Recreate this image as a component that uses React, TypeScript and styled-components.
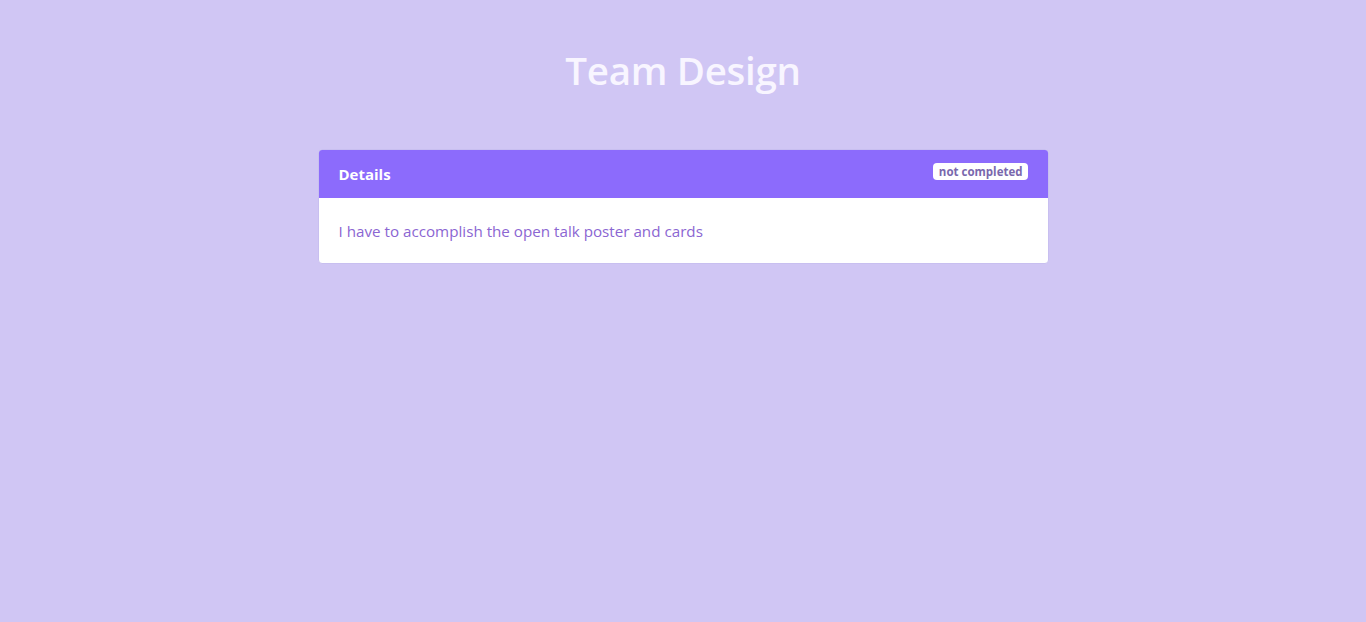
import React from 'react';
import styled, { createGlobalStyle } from 'styled-components';

const GlobalStyle = createGlobalStyle`
	html, body {
		margin: 0;
		padding: 0;
		background: #d0c6f4;
		font-family: 'Open Sans', 'Noto Sans', sans-serif;
	}
`;

interface Task {
	title: string;
	description: string;
	completed: boolean;
}

const task: Task = {
	title: 'Details',
	description: 'I have to accomplish the open talk poster and cards',
	completed: false,
};

const App: React.FC = () => {
	return (
		<>
			<GlobalStyle />
			<Page>
				<Title>Team Design</Title>
				<Card>
					<CardHeader>
						<HeaderText>{task.title}</HeaderText>
						<Badge>{task.completed ? 'completed' : 'not completed'}</Badge>
					</CardHeader>
					<CardBody>{task.description}</CardBody>
				</Card>
			</Page>
		</>
	);
};

export default App;

const Page = styled.div`
	min-height: 622px;
	display: flex;
	flex-direction: column;
	align-items: center;
	padding-top: 43px;
	box-sizing: border-box;
`;

const Title = styled.h1`
	margin: 0 0 52px;
	font-size: 38.5px;
	font-weight: 600;
	line-height: 54px;
	color: #f8f5ff;
	letter-spacing: -0.3px;
`;

const Card = styled.div`
	width: 729px;
	background: #ffffff;
	border: 1px solid #c8bff0;
	border-radius: 4px;
	overflow: hidden;
`;

const CardHeader = styled.div`
	height: 48px;
	background: #8c6bfc;
	display: flex;
	align-items: center;
	justify-content: space-between;
	padding: 0 20px;
	box-sizing: border-box;
`;

const HeaderText = styled.span`
	color: #ffffff;
	font-size: 15px;
	font-weight: 700;
`;

const Badge = styled.span`
	background: #ffffff;
	color: #7a68ad;
	font-size: 11.5px;
	font-weight: 700;
	line-height: 17px;
	padding: 0 5px 0 6px;
	border-radius: 4px;
	margin-top: -6px;
`;

const CardBody = styled.div`
	padding: 22px 20px 21px;
	font-size: 15.2px;
	line-height: 22px;
	color: #8b66d2;
`;
